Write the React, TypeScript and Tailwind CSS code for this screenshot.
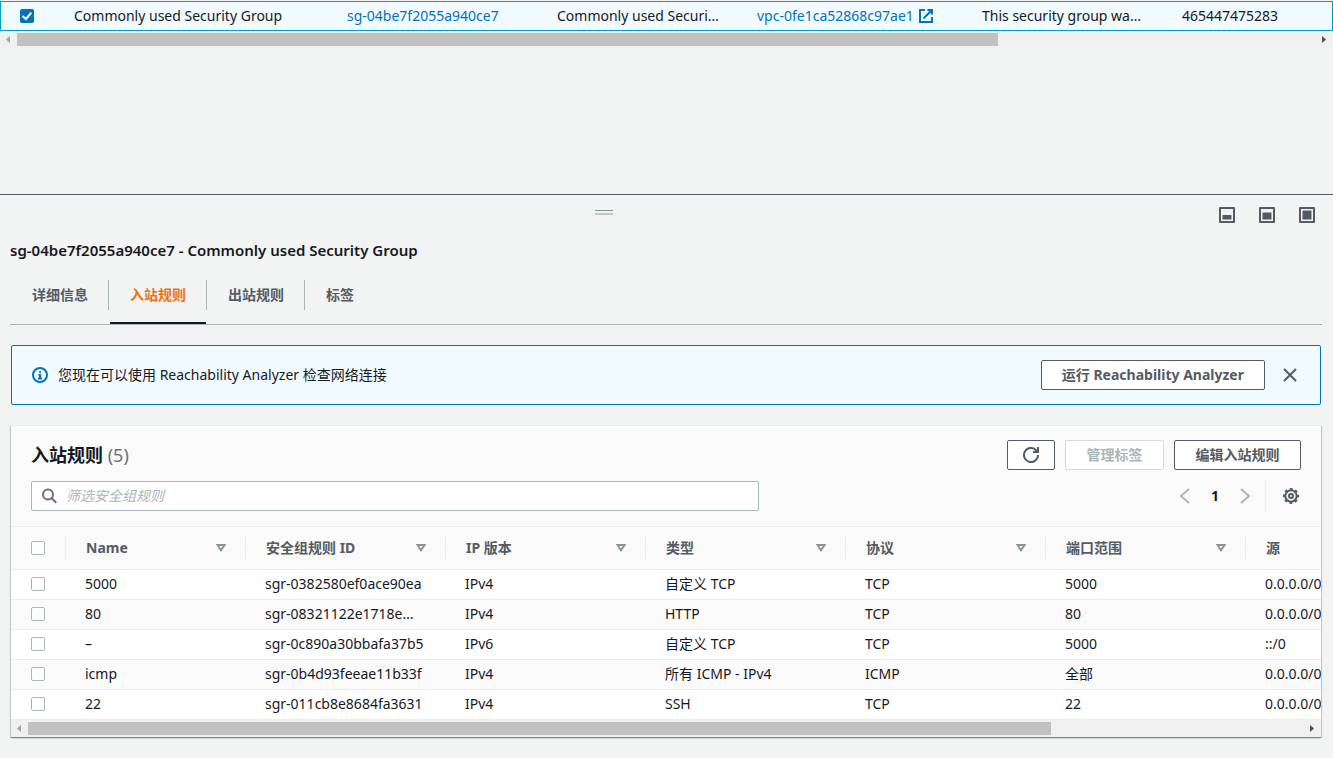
import type { ReactNode } from "react";

const CELL = "truncate px-5 py-0 align-middle";

function Checkbox({ label, checked = false }: { label: string; checked?: boolean }) {
  return (
    <span className="grid size-[14px] place-items-center">
      <input
        type="checkbox"
        aria-label={label}
        defaultChecked={checked}
        className="peer col-start-1 row-start-1 size-[14px] appearance-none rounded-[2px] border border-[#aab7b8] bg-white checked:border-[#0073bb] checked:bg-[#0073bb]"
      />
      <svg
        viewBox="0 0 14 14"
        className="pointer-events-none invisible col-start-1 row-start-1 size-[14px] peer-checked:visible"
        fill="none"
        stroke="#fff"
        strokeWidth="2"
      >
        <path d="M2.5 7 6 10 11.3 3.6" />
      </svg>
    </span>
  );
}

function ScrollBar({ thumb }: { thumb: string }) {
  return (
    <div aria-hidden="true" className="flex h-[17px] items-center bg-[#f0f0f0]">
      <svg viewBox="0 0 17 17" className="size-[17px] shrink-0" fill="#a3a3a3">
        <path d="M10 5v7L6 8.500Z" />
      </svg>
      <div className="flex-1">
        <div className={`h-[13px] bg-[#c1c1c1] ${thumb}`} />
      </div>
      <svg viewBox="0 0 17 17" className="size-[17px] shrink-0" fill="#505050">
        <path d="M6 5v7l4-3.500Z" />
      </svg>
    </div>
  );
}

function GroupsTable() {
  return (
    <section aria-label="安全组" className="h-[194px]">
      <div className="overflow-hidden pt-px">
        <table className="w-full min-w-[1320px] table-fixed border-collapse text-left outline outline-1 -outline-offset-1 outline-[#00a1c9]">
          <colgroup>
            <col className="w-[54px]" />
            <col className="w-[273px]" />
            <col className="w-[210px]" />
            <col className="w-[200px]" />
            <col className="w-[225px]" />
            <col className="w-[200px]" />
            <col />
          </colgroup>
          <tbody>
            <tr className="h-[30px] bg-[#f1faff]">
              <td className="pl-5">
                <Checkbox label="选择 Commonly used Security Group" checked />
              </td>
              <td className={CELL}>Commonly used Security Group</td>
              <td className={CELL}>
                <a href="#group" className="text-[#0073bb]">sg-04be7f2055a940ce7</a>
              </td>
              <td className="truncate pl-5">Commonly used Securi…</td>
              <td className="pl-5">
                <a href="#vpc" className="flex items-center gap-1 whitespace-nowrap text-[#0073bb]">
                  vpc-0fe1ca52868c97ae1
                  <svg viewBox="0 0 16 16" className="size-4" fill="none" stroke="currentColor" strokeWidth="2">
                    <path d="M7 2H2v12h12V9M9.500 2H14v4.500M14 2 5.500 10.500" />
                  </svg>
                </a>
              </td>
              <td className="truncate pl-5">This security group wa…</td>
              <td className="truncate pl-5">465447475283</td>
            </tr>
          </tbody>
        </table>
      </div>
      <ScrollBar thumb="w-[75.5%]" />
    </section>
  );
}

function PanelSizeButton({ label, children }: { label: string; children: ReactNode }) {
  return (
    <button type="button" aria-label={label}>
      <svg viewBox="0 0 16 16" className="size-4" fill="#545b64">
        <path d="M1 1h14v14H1Z" fill="none" stroke="#545b64" strokeWidth="2" strokeLinejoin="round" />
        {children}
      </svg>
    </button>
  );
}

function Tabs() {
  const tabs = ["详细信息", "入站规则", "出站规则", "标签"];
  return (
    <div role="tablist" className="mr-[11px] ml-[10px] mt-[13px] flex h-[51px] border-b border-[#aab7b8]">
      {tabs.map((tab, i) => {
        const active = i === 1;
        const last = i === tabs.length - 1;
        return (
          <div key={tab} className="flex">
            <button
              type="button"
              role="tab"
              aria-selected={active}
              className={
                active
                  ? "ml-[2px] flex border-b-2 border-[#16191f] px-5 pt-[10px] font-bold text-[#ec7211]"
                  : "ml-[2px] flex px-5 pt-[10px] font-bold text-[#545b64]"
              }
            >
              {tab}
            </button>
            {!last && <span className="-mr-px mt-[6px] h-[30px] border-l border-[#aab7b8]" />}
          </div>
        );
      })}
    </div>
  );
}

function Alert() {
  return (
    <div className="mr-3 ml-[11px] mt-5 flex h-[60px] items-center rounded-[2px] border border-[#0073bb] bg-[#f1faff] pr-[22px] pl-5">
      <svg viewBox="0 0 16 16" className="size-4 shrink-0" fill="none" stroke="#0073bb" strokeWidth="2">
        <circle cx="8" cy="8" r="7" />
        <path d="M8 11V8H6.500M6 11.500h4M7.200 5h1.700" />
      </svg>
      <p className="ml-[10px] flex-1">您现在可以使用 Reachability Analyzer 检查网络连接</p>
      <button
        type="button"
        className="h-[30px] rounded-[2px] border border-[#545b64] bg-white px-5 font-bold text-[#545b64]"
      >
        运行 Reachability Analyzer
      </button>
      <button type="button" aria-label="关闭" className="ml-[17px]">
        <svg viewBox="0 0 16 16" className="size-4" fill="none" stroke="#545b64" strokeWidth="2">
          <path d="m2 2 12 12M14 2 2 14" />
        </svg>
      </button>
    </div>
  );
}

const COLUMNS = ["Name", "安全组规则 ID", "IP 版本", "类型", "协议", "端口范围", "源"];

const ROWS = [
  ["5000", "sgr-0382580ef0ace90ea", "IPv4", "自定义 TCP", "TCP", "5000", "0.0.0.0/0"],
  ["80", "sgr-08321122e1718e…", "IPv4", "HTTP", "TCP", "80", "0.0.0.0/0"],
  ["–", "sgr-0c890a30bbafa37b5", "IPv6", "自定义 TCP", "TCP", "5000", "::/0"],
  ["icmp", "sgr-0b4d93feeae11b33f", "IPv4", "所有 ICMP - IPv4", "ICMP", "全部", "0.0.0.0/0"],
  ["22", "sgr-011cb8e8684fa3631", "IPv4", "SSH", "TCP", "22", "0.0.0.0/0"],
];

function RulesTable() {
  return (
    <div className="overflow-hidden">
      <table className="w-[1434px] table-fixed border-collapse text-left">
        <colgroup>
          <col className="w-[54px]" />
          <col className="w-[180px]" />
          <col className="w-[200px]" span={6} />
        </colgroup>
        <thead>
          <tr className="h-[42px] border-b border-[#eaeded]">
            <th className="pl-5">
              <Checkbox label="全选" />
            </th>
            {COLUMNS.map((column) => (
              <th key={column} className="p-0">
                <div className="flex items-center border-l border-[#eaeded] pr-[19px] pl-5 font-bold text-[#545b64]">
                  <span className="flex-1 whitespace-nowrap">{column}</span>
                  <button type="button" aria-label={`按 ${column} 排序`}>
                    <svg viewBox="0 0 10 8" className="h-2 w-[10px]" fill="none" stroke="#879596" strokeWidth="2">
                      <path d="M1.500 1h7L5 6.300Z" />
                    </svg>
                  </button>
                </div>
              </th>
            ))}
          </tr>
        </thead>
        <tbody>
          {ROWS.map((row) => (
            <tr key={row[1]} className="h-[30px] border-b border-[#eaeded] bg-white even:bg-[#fafafa]">
              <td className="pl-5">
                <Checkbox label={`选择 ${row[1]}`} />
              </td>
              {row.map((cell, i) => (
                <td key={i} className="whitespace-nowrap pl-5">{cell}</td>
              ))}
            </tr>
          ))}
        </tbody>
      </table>
    </div>
  );
}

function RulesPanel() {
  return (
    <section className="mr-3 ml-[11px] mt-5 border-t border-[#eaeded] bg-[#fafafa] shadow-[0_1px_1px_0_rgba(0,28,36,0.3),1px_1px_1px_0_rgba(0,28,36,0.15),-1px_1px_1px_0_rgba(0,28,36,0.15)]">
      <div className="border-b border-[#eaeded] px-5 pt-[14px] pb-[15px]">
        <div className="flex h-[30px] items-center gap-[10px]">
          <h2 className="flex-1 text-[18px] font-bold">
            入站规则 <span className="font-normal text-[#687078]">(5)</span>
          </h2>
          <button
            type="button"
            aria-label="刷新"
            className="flex h-[30px] w-12 items-center justify-center rounded-[2px] border border-[#545b64] bg-white"
          >
            <svg viewBox="0 0 16 16" className="size-4" fill="none" stroke="#545b64" strokeWidth="2">
              <path d="M10 5h5V0" />
              <path d="M15 8a7 7 0 1 1-1.800-4.700L15 5" />
            </svg>
          </button>
          <button
            type="button"
            disabled
            className="h-[30px] min-w-[99px] rounded-[2px] border border-[#d5dbdb] bg-white px-5 font-bold text-[#aab7b8]"
          >
            管理标签
          </button>
          <button
            type="button"
            className="h-[30px] min-w-[127px] rounded-[2px] border border-[#545b64] bg-white px-5 font-bold text-[#545b64]"
          >
            编辑入站规则
          </button>
        </div>
        <div className="mt-[11px] flex h-[30px] items-center justify-between">
          <label className="flex h-full w-full max-w-[728px] items-center rounded-[2px] border border-[#aab7b8] bg-white pl-[10px]">
            <svg viewBox="0 0 16 16" className="size-4 shrink-0" fill="none" stroke="#687078" strokeWidth="2">
              <circle cx="6" cy="6.500" r="5" />
              <path d="m9.700 10.200 4.600 4.600" />
            </svg>
            <input
              type="text"
              aria-label="筛选安全组规则"
              placeholder="筛选安全组规则"
              className="ml-2 flex-1 bg-transparent outline-none placeholder:text-[#aab7b8] placeholder:italic"
            />
          </label>
          <div className="flex h-full items-center">
            <button type="button" aria-label="上一页" className="flex w-[30px] justify-center">
              <svg viewBox="0 0 16 16" className="size-4" fill="none" stroke="#aab7b8" strokeWidth="2">
                <path d="M12 1 4 8l8 7" />
              </svg>
            </button>
            <button type="button" aria-current="page" className="w-[30px] font-bold">
              1
            </button>
            <button type="button" aria-label="下一页" className="flex w-[30px] justify-center">
              <svg viewBox="0 0 16 16" className="size-4" fill="none" stroke="#aab7b8" strokeWidth="2">
                <path d="m4 1 8 7-8 7" />
              </svg>
            </button>
            <span className="ml-[5px] h-full border-l border-[#eaeded]" />
            <button type="button" aria-label="首选项" className="mr-[2px] ml-[17px]">
              <svg viewBox="0 0 16 16" className="size-4" fill="none" stroke="#545b64" strokeWidth="2">
                <circle cx="8" cy="8" r="5.700" />
                <circle cx="8" cy="8" r="7" strokeDasharray="2.750 2.748" strokeDashoffset="1.375" />
                <circle cx="8" cy="8" r="2" />
              </svg>
            </button>
          </div>
        </div>
      </div>
      <RulesTable />
      <ScrollBar thumb="w-[80.2%]" />
    </section>
  );
}

export default function App() {
  return (
    <main
      lang="zh-CN"
      className="min-h-screen bg-[#f2f3f3] pb-5 font-['Noto_Sans','Noto_Sans_CJK_SC',sans-serif] text-[14px] leading-[22px] text-[#16191f]"
    >
      <GroupsTable />
      <section aria-label="安全组详细信息" className="border-t border-[#545b64]">
        <div className="flex h-[44px] items-start gap-[11px] pr-[18px]">
          <div className="flex flex-1 justify-center pt-[15px]">
            <button type="button" aria-label="调整面板大小" className="w-[18px]">
              <span className="block h-px bg-[#879596]" />
              <span className="mt-[2px] block h-[2px] bg-[#c3c7c8]" />
            </button>
          </div>
          <div className="mt-3 flex gap-6">
            <PanelSizeButton label="小">
              <path d="M3.500 8h9v4.500h-9Z" />
            </PanelSizeButton>
            <PanelSizeButton label="中">
              <path d="M3.500 5.500h9v7h-9Z" />
            </PanelSizeButton>
            <PanelSizeButton label="大">
              <path d="M3.500 3.500h9v9h-9Z" />
            </PanelSizeButton>
          </div>
        </div>
        <h1 className="px-[10px] text-[15px] font-semibold">sg-04be7f2055a940ce7 - Commonly used Security Group</h1>
        <Tabs />
        <Alert />
        <RulesPanel />
      </section>
    </main>
  );
}
